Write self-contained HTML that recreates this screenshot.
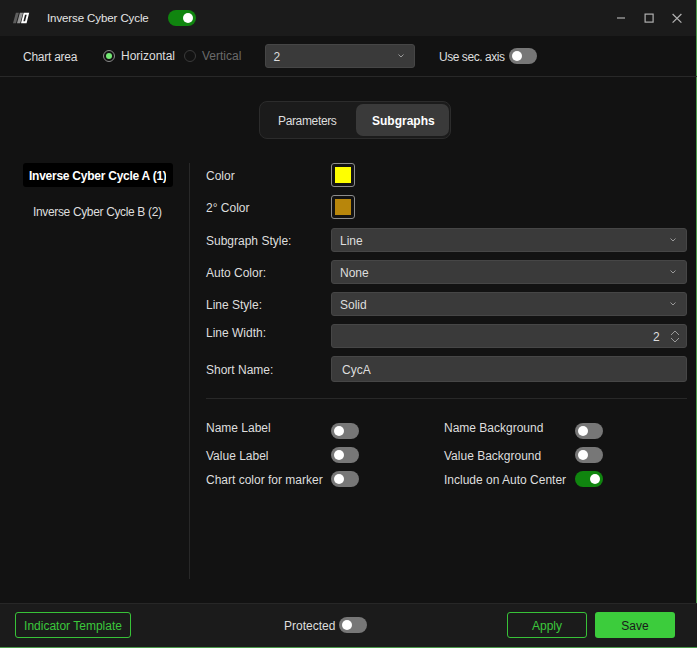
<!DOCTYPE html>
<html><head><meta charset="utf-8">
<style>
*{box-sizing:border-box;margin:0;padding:0}
html,body{width:697px;height:648px;overflow:hidden;background:#121212}
body{position:relative;font-family:"Liberation Sans",sans-serif;font-size:12px;color:#dedede}
.a{position:absolute;white-space:nowrap}
#title{left:0;top:0;width:697px;height:36px;background:#1b1b1b}
#tb{left:0;top:36px;width:697px;height:40px;background:#121212}
.hl{height:1px;background:#282828}
.vl{width:1px;background:#282828}
.tog{position:absolute;width:28px;height:16px;border-radius:8px;background:#777777}
.tog::after{content:"";position:absolute;left:3px;top:3px;width:10px;height:10px;border-radius:50%;background:#fff}
.tog.on{background:#10850f}
.tog.on::after{left:15px}
.dd{position:absolute;background:#3a3a3a;border:1px solid #464646;border-radius:3px}
.chev{position:absolute;right:10px;top:9px;width:6px;height:4px}
.sw{position:absolute;width:24px;height:24px;border:1.5px solid #8c8c8c;border-radius:3px;background:#121212}
.sw i{position:absolute;left:2.5px;top:2.5px;width:16px;height:16px;display:block}
.lbl{position:absolute;left:206px;white-space:nowrap}
#foot{left:0;top:603px;width:697px;height:45px;background:#1b1b1b}
.btn{position:absolute;border:1px solid #38c238;border-radius:3px;color:#3cc83c;text-align:center}
</style></head><body>
<div class="a" id="title"></div>
<!-- logo -->
<svg class="a" style="left:0;top:0" width="40" height="36" viewBox="0 0 40 36">
<polygon points="13,23.2 16,23.2 18.9,12.8 15.9,12.8" fill="#5e5e5e"/>
<polygon points="17,23.2 20.2,23.2 23.1,12.8 19.9,12.8" fill="#969696"/>
<polygon points="21,23.2 26.6,23.2 29.2,12.8 23.6,12.8" fill="#ffffff"/>
<polygon points="23.4,21.2 25.1,21.2 26.7,14.8 25,14.8" fill="#1b1b1b"/>
</svg>
<div class="a" style="left:47px;top:12px;font-size:11.5px;letter-spacing:-0.1px;color:#e6e6e6">Inverse Cyber Cycle</div>
<div class="tog on" style="left:168px;top:10px"></div>
<!-- window controls -->
<svg class="a" style="left:610px;top:8px" width="80" height="20" viewBox="0 0 80 20">
<line x1="7" y1="10" x2="15" y2="10" stroke="#b0b0b0" stroke-width="1.2"/>
<rect x="35.1" y="6.1" width="8" height="8" fill="none" stroke="#b0b0b0" stroke-width="1.2"/>
<path d="M62.6 6 L71.4 14.6 M71.4 6 L62.6 14.6" stroke="#b0b0b0" stroke-width="1.25"/>
</svg>
<div class="a" style="left:696px;top:0;width:1px;height:648px;background:#4a9a4a"></div>

<!-- toolbar -->
<div class="a" style="left:23px;top:50px;letter-spacing:-0.25px">Chart area</div>
<div class="a" style="left:103px;top:50px;width:12px;height:12px;border-radius:50%;border:1px solid #8a8a8a"></div>
<div class="a" style="left:106px;top:53px;width:6px;height:6px;border-radius:50%;background:#74ea74"></div>
<div class="a" style="left:121px;top:49px">Horizontal</div>
<div class="a" style="left:184px;top:50px;width:12px;height:12px;border-radius:50%;border:1px solid #3a3a3a"></div>
<div class="a" style="left:202px;top:49px;color:#6a6a6a">Vertical</div>
<div class="dd" style="left:265px;top:44px;width:150px;height:24px">
 <div class="a" style="left:7.5px;top:5px">2</div>
 <svg class="chev" viewBox="0 0 6 4"><path d="M0.5 0.5 L3 3 L5.5 0.5" fill="none" stroke="#9a9a9a" stroke-width="1"/></svg>
</div>
<div class="a" style="left:439px;top:50px;letter-spacing:-0.45px">Use sec. axis</div>
<div class="tog" style="left:508.5px;top:48px"></div>
<div class="a hl" style="left:0;top:76px;width:697px"></div>

<!-- tabs -->
<div class="a" style="left:259px;top:101px;width:192px;height:38px;border:1px solid #2c2c2c;border-radius:8px;background:#1b1b1b"></div>
<div class="a" style="left:356px;top:104px;width:93px;height:32px;border-radius:7px;background:#3a3a3a"></div>
<div class="a" style="left:278px;top:114px;letter-spacing:-0.35px">Parameters</div>
<div class="a" style="left:372px;top:114px;font-weight:bold;color:#fff">Subgraphs</div>

<!-- left list -->
<div class="a" style="left:23px;top:163px;width:150px;height:24px;background:#000;border-radius:3px"></div>
<div class="a" style="left:29px;top:163px;width:137px;height:24px;overflow:hidden">
 <div class="a" style="left:0;top:6px;font-weight:bold;color:#fff;letter-spacing:-0.25px">Inverse Cyber Cycle A (1)</div>
</div>
<div class="a" style="left:33px;top:205px;letter-spacing:-0.35px">Inverse Cyber Cycle B (2)</div>
<div class="a vl" style="left:189px;top:163px;height:416px"></div>

<!-- form -->
<div class="lbl" style="top:169px">Color</div>
<div class="sw" style="left:331px;top:163px"><i style="background:#ffff00"></i></div>
<div class="lbl" style="top:201px">2° Color</div>
<div class="sw" style="left:331px;top:195px"><i style="background:#b8860b"></i></div>

<div class="lbl" style="top:234px">Subgraph Style:</div>
<div class="dd" style="left:331px;top:228px;width:356px;height:24px">
 <div class="a" style="left:8px;top:5px">Line</div>
 <svg class="chev" viewBox="0 0 6 4"><path d="M0.5 0.5 L3 3 L5.5 0.5" fill="none" stroke="#9a9a9a" stroke-width="1"/></svg>
</div>
<div class="lbl" style="top:266px">Auto Color:</div>
<div class="dd" style="left:331px;top:260px;width:356px;height:24px">
 <div class="a" style="left:8px;top:5px">None</div>
 <svg class="chev" viewBox="0 0 6 4"><path d="M0.5 0.5 L3 3 L5.5 0.5" fill="none" stroke="#9a9a9a" stroke-width="1"/></svg>
</div>
<div class="lbl" style="top:298px">Line Style:</div>
<div class="dd" style="left:331px;top:292px;width:356px;height:24px">
 <div class="a" style="left:8px;top:5px">Solid</div>
 <svg class="chev" viewBox="0 0 6 4"><path d="M0.5 0.5 L3 3 L5.5 0.5" fill="none" stroke="#9a9a9a" stroke-width="1"/></svg>
</div>
<div class="lbl" style="top:326px">Line Width:</div>
<div class="dd" style="left:331px;top:324px;width:356px;height:24px">
 <div class="a" style="left:321px;top:5px">2</div>
 <svg class="a" style="left:338px;top:5px" width="10" height="14" viewBox="0 0 10 14"><path d="M1 5 L5 1 L9 5 M1 8 L5 12 L9 8" fill="none" stroke="#9a9a9a" stroke-width="1"/></svg>
</div>
<div class="lbl" style="top:363px">Short Name:</div>
<div class="dd" style="left:331px;top:356px;width:356px;height:26px">
 <div class="a" style="left:10px;top:6px">CycA</div>
</div>
<div class="a hl" style="left:206px;top:398px;width:481px"></div>

<!-- toggles -->
<div class="lbl" style="top:421px">Name Label</div>
<div class="tog" style="left:331px;top:423px"></div>
<div class="lbl" style="top:449px">Value Label</div>
<div class="tog" style="left:331px;top:447px"></div>
<div class="lbl" style="top:473px">Chart color for marker</div>
<div class="tog" style="left:331px;top:471px"></div>

<div class="lbl" style="left:444px;top:421px">Name Background</div>
<div class="tog" style="left:574.5px;top:423px"></div>
<div class="lbl" style="left:444px;top:449px">Value Background</div>
<div class="tog" style="left:574.5px;top:447px"></div>
<div class="lbl" style="left:444px;top:473px">Include on Auto Center</div>
<div class="tog on" style="left:574.5px;top:471px"></div>

<!-- footer -->
<div class="a" id="foot"></div>
<div class="a hl" style="left:0;top:603px;width:697px;background:#272727"></div>
<div class="btn" style="left:15px;top:612px;width:116px;height:26px;line-height:26px">Indicator Template</div>
<div class="a" style="left:284px;top:619px">Protected</div>
<div class="tog" style="left:339px;top:617px"></div>
<div class="btn" style="left:507px;top:612px;width:80px;height:26px;line-height:26px">Apply</div>
<div class="btn" style="left:595px;top:612px;width:80px;height:26px;line-height:29px;border:none;background:#3ccc3c;color:#1a1a1a">Save</div>
<div class="a" style="left:0;top:647px;width:697px;height:1px;background:#4a9a4a"></div>
</body></html>
